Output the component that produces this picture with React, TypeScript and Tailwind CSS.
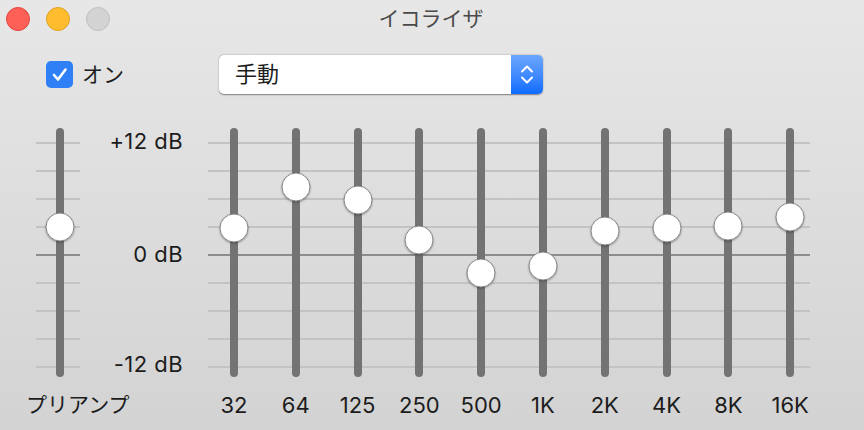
import React from 'react';

// Equalizer window: preamp + 10 band sliders, values as knob offsets (px from track top)
const PREAMP = 99;
const BANDS: { label: string; pos: number }[] = [
  { label: '32', pos: 100 },
  { label: '64', pos: 59 },
  { label: '125', pos: 72 },
  { label: '250', pos: 112 },
  { label: '500', pos: 145 },
  { label: '1K', pos: 138 },
  { label: '2K', pos: 103 },
  { label: '4K', pos: 100 },
  { label: '8K', pos: 98 },
  { label: '16K', pos: 89 },
];

const FONT = "font-['Inter','Noto_Sans_CJK_JP',sans-serif]";

const GridLines: React.FC = () => (
  <div className="absolute inset-0 flex flex-col pt-[14px] gap-[26.5px]">
    {Array.from({ length: 9 }).map((_, i) => (
      <div
        key={i}
        className={`h-[1.5px] w-full ${i === 4 ? 'bg-[#8d8d8d]' : 'bg-[#c3c3c3]'}`}
      />
    ))}
  </div>
);

const Track: React.FC<{ pos: number }> = ({ pos }) => (
  <div className="relative h-[249px] w-2 rounded-full bg-[#737373]">
    <div
      className="absolute left-1/2 h-[29px] w-[29px] -translate-x-1/2 -translate-y-1/2 rounded-full border border-[#888] bg-white shadow-[0_1px_2px_rgba(0,0,0,0.3)]"
      style={{ top: pos }}
    />
  </div>
);

export default function App() {
  return (
    <div
      className={`${FONT} relative h-[430px] w-[864px] overflow-hidden bg-gradient-to-b from-[#e7e7e7] to-[#d3d3d3] text-[#1c1c1c]`}
    >
      {/* title bar */}
      <div className="relative flex h-[38px] items-center pl-[6px]">
        <div className="flex gap-4">
          <span className="h-6 w-6 rounded-full border border-[#e2463f] bg-[#fe5f57]" />
          <span className="h-6 w-6 rounded-full border border-[#e0a123] bg-[#febc2e]" />
          <span className="h-6 w-6 rounded-full border border-[#c0c0c0] bg-[#d3d3d3]" />
        </div>
        <div className="absolute inset-0 flex items-center justify-center text-[21px] text-[#4a4a4a]">
          <span className="ml-[-2px]">イコライザ</span>
        </div>
      </div>

      {/* on switch + preset */}
      <div className="mt-[17px] flex h-[39px] items-center">
        <div className="ml-[46px] flex items-center">
          <span className="flex h-[27px] w-[27px] items-center justify-center rounded-[5px] bg-[#2f80f6]">
            <svg width="17" height="17" viewBox="0 0 17 17" fill="none">
              <path
                d="M3 9 L7 13.5 L14.5 3.5"
                stroke="white"
                strokeWidth="2.6"
                strokeLinecap="round"
                strokeLinejoin="round"
              />
            </svg>
          </span>
          <span className="ml-[9px] text-[21px] leading-none">オン</span>
        </div>
        <div className="ml-[95px] flex h-[39px] w-[324px] overflow-hidden rounded-[5px] bg-white shadow-[0_0.5px_1.5px_rgba(0,0,0,0.45)]">
          <span className="flex flex-1 items-center pl-4 text-[22px]">手動</span>
          <span className="flex w-8 flex-col items-center justify-center gap-[3px] bg-gradient-to-b from-[#6ca7fd] to-[#0a6bfe]">
            <svg width="14" height="9" viewBox="0 0 14 9" fill="none">
              <path d="M2 7.5 L7 2.5 L12 7.5" stroke="white" strokeWidth="2" strokeLinecap="round" strokeLinejoin="round" />
            </svg>
            <svg width="14" height="9" viewBox="0 0 14 9" fill="none">
              <path d="M2 1.5 L7 6.5 L12 1.5" stroke="white" strokeWidth="2" strokeLinecap="round" strokeLinejoin="round" />
            </svg>
          </span>
        </div>
      </div>

      {/* sliders */}
      <div className="mt-[34px] flex items-start">
        {/* preamp */}
        <div className="ml-[36px] flex w-[44px] flex-col items-start">
          <div className="relative flex h-[249px] w-full justify-center pl-1">
            <GridLines />
            <Track pos={PREAMP} />
          </div>
          <span className="-ml-[10px] mt-[16px] whitespace-nowrap text-[21px] leading-6">プリアンプ</span>
        </div>

        {/* dB scale */}
        <div className="flex h-[249px] w-[103px] flex-col items-end text-[22px] leading-6 tracking-[0.02em]">
          <span className="mt-[1px]">+12 dB</span>
          <span className="mt-[89px]">0 dB</span>
          <span className="mt-[86px]">-12 dB</span>
        </div>

        {/* bands */}
        <div className="relative ml-[20.1px] flex">
          <div className="absolute left-[4.9px] top-0 h-[249px] w-[602px]">
            <GridLines />
          </div>
          {BANDS.map((b) => (
            <div key={b.label} className="relative flex w-[61.8px] flex-col items-center">
              <Track pos={b.pos} />
              <span className="mt-[16px] text-[22px] leading-6">{b.label}</span>
            </div>
          ))}
        </div>
      </div>
    </div>
  );
}
